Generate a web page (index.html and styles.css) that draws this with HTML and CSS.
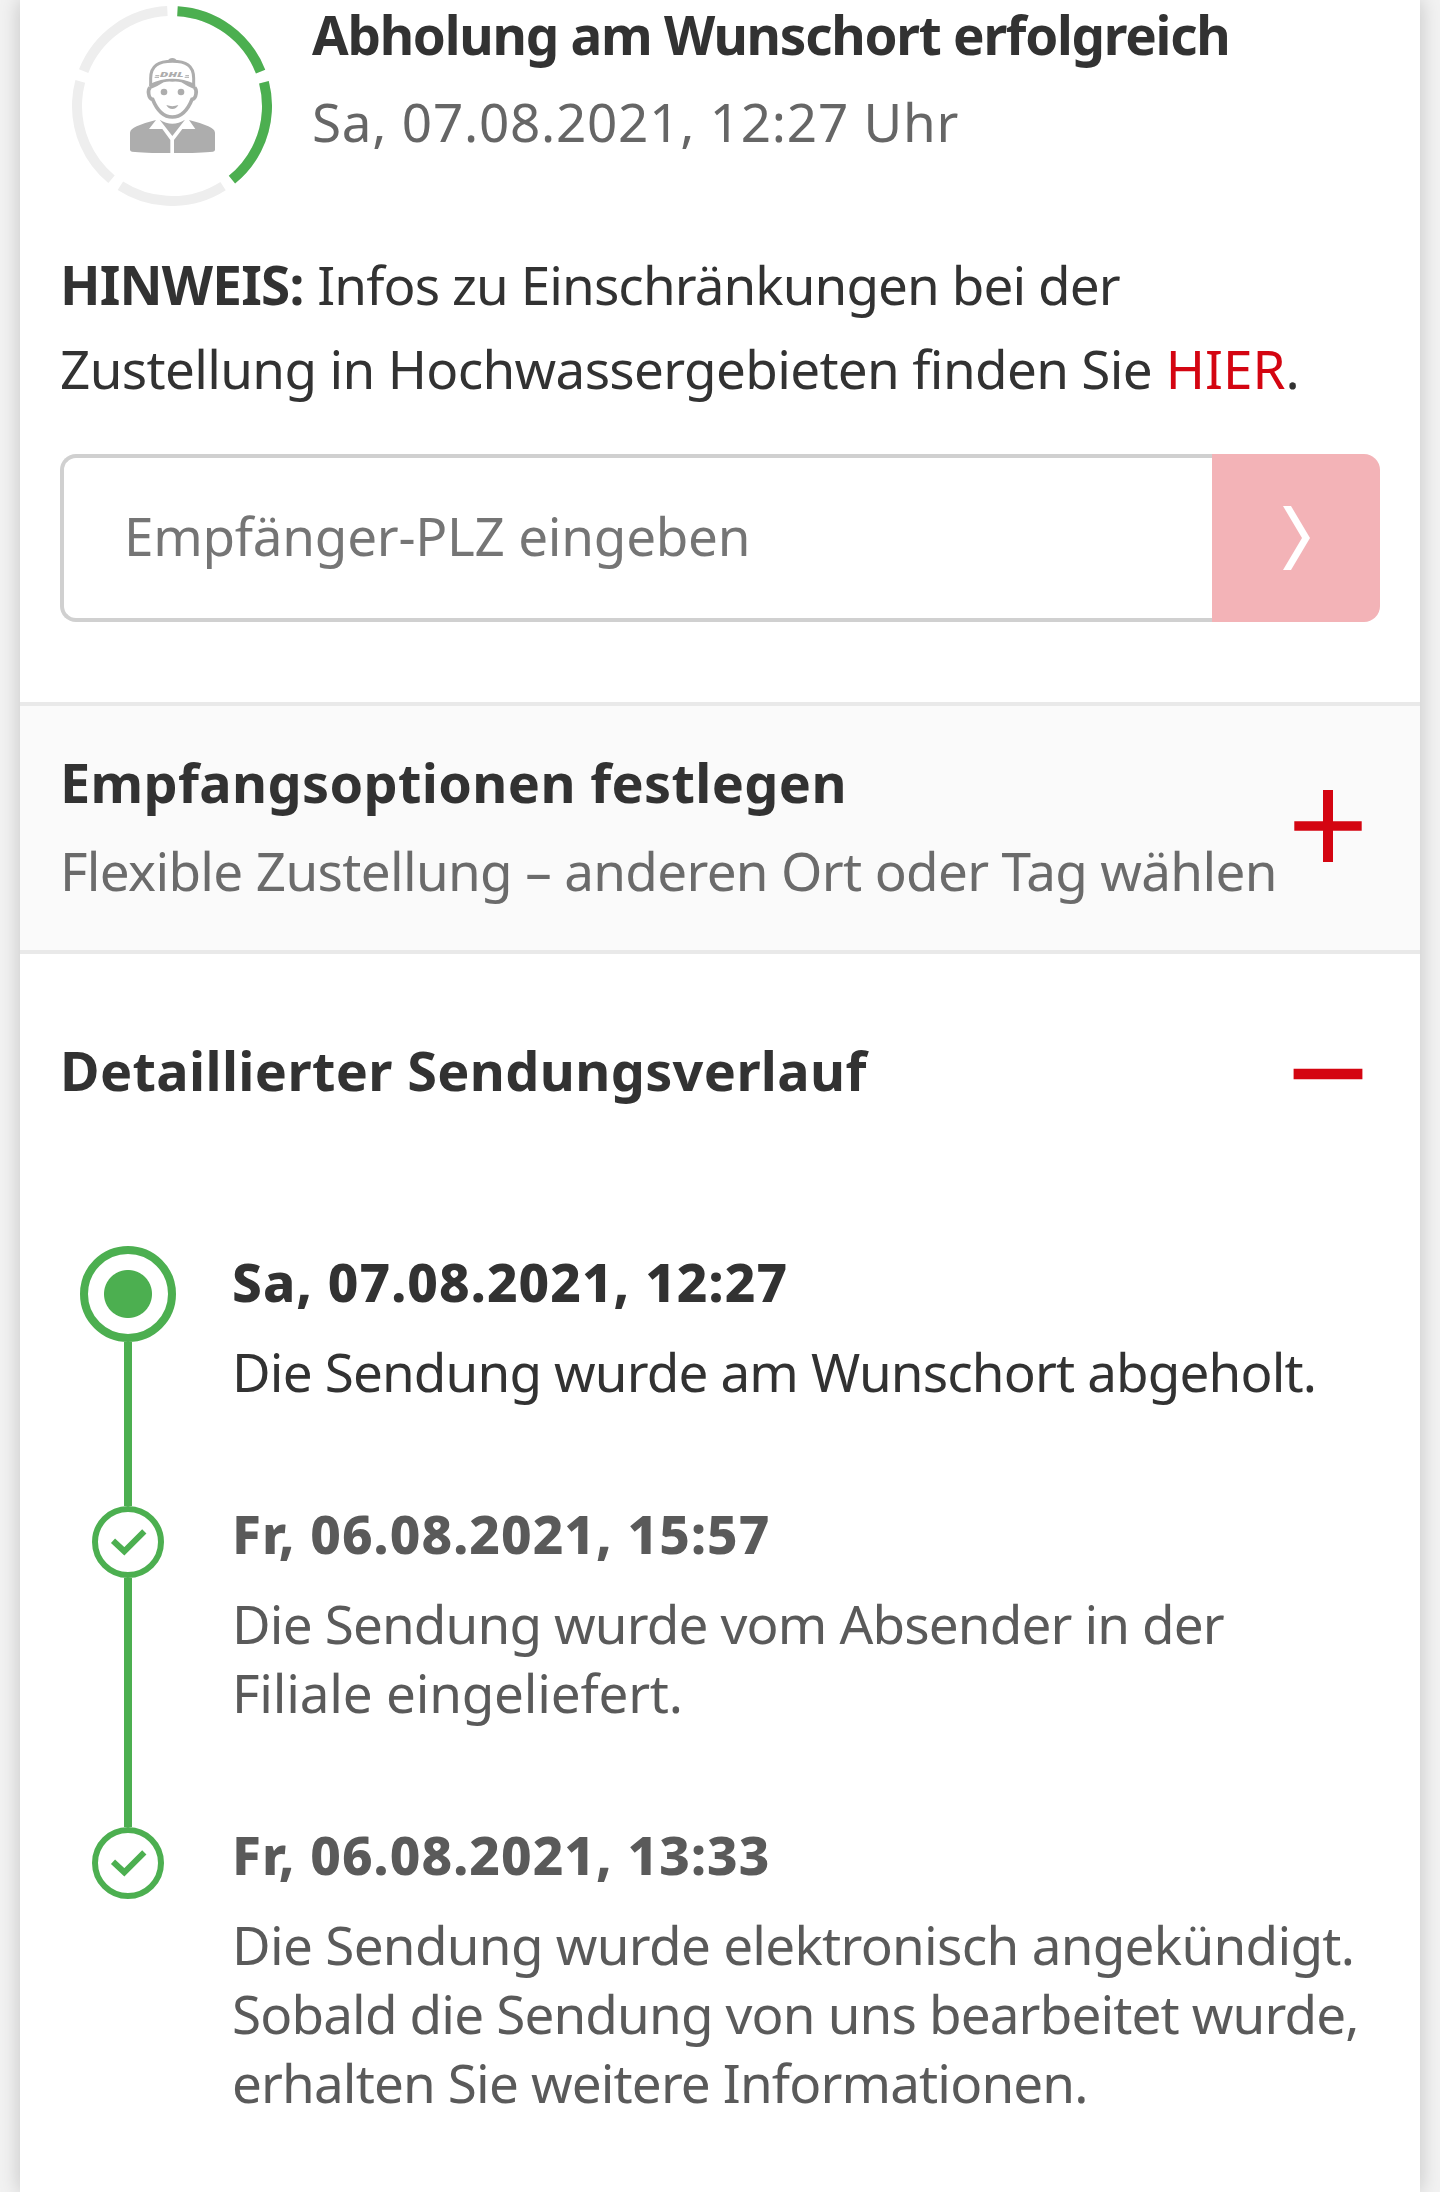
FILE: index.html
```html
<!DOCTYPE html>
<html lang="de">
<head>
	<meta charset="utf-8">
	<meta name="viewport" content="width=device-width, initial-scale=1">
	<title>Sendungsverfolgung</title>
	<link rel="stylesheet" href="styles.css">
</head>
<body>
	<main class="card">
		<section class="status">
			<div class="status-head">
				<svg class="progress" viewBox="216 18 600 600">
					<circle class="track" cx="516" cy="318" r="285" pathLength="360" stroke-dasharray="65.4 6.6" transform="rotate(-86.7 516 318)"/>
					<circle class="done" cx="516" cy="318" r="285" pathLength="360" stroke-dasharray="65.4 6.6 65.4 222.6" transform="rotate(-86.7 516 318)"/>
					<g class="courier">
						<path d="M503 183Q507 174 517 174Q527 174 531 183Z"/>
						<path class="line" d="M452 258V235C452 196 476 184 517 184C558 184 581 196 581 235V258"/>
						<path d="M449 252Q482 236 517 236Q552 236 585 252L587 269Q561 259 544 247Q531 243 517 245Q504 243 491 247Q474 259 447 269Z"/>
						<path class="line thick" d="M450 263Q444 269 446 281Q448 296 458 298C470 328 490 351 517 351C544 351 564 328 576 298Q586 296 588 281Q590 269 584 263"/>
						<circle cx="492" cy="276" r="10"/>
						<circle cx="543" cy="276" r="10"/>
						<path d="M499 315Q517 322 535 315Q529 327 517 327Q505 327 499 315Z"/>
						<text x="479" y="231" textLength="72" lengthAdjust="spacingAndGlyphs">DHL</text>
						<path class="stripe" d="M466 227H478M464 232H477M556 227H567M554 232H567"/>
						<path d="M390 398Q391 387 410 379Q438 367 468 360L447 387H487L511 420V459Q430 459 396 455Q390 454 390 449Z"/>
						<path d="M645 398Q644 387 625 379Q597 367 567 360L586 387H547L522 420V459Q604 459 639 455Q645 454 645 449Z"/>
						<path d="M479 359Q498 371 517 371Q536 371 555 359L517 408Z"/>
					</g>
				</svg>
				<div class="status-text">
					<h1 class="headline">Abholung am Wunschort erfolgreich</h1>
					<p class="date">Sa, 07.08.2021, 12:27 Uhr</p>
				</div>
			</div>
			<p class="notice"><b>HINWEIS:</b> <span class="narrow">Infos zu Einschränkungen bei der</span><br><span class="semi">Zustellung in Hochwassergebieten finden Sie</span> <a href="#">HIER</a>.</p>
			<form class="plz">
				<input class="plz-input" type="text" placeholder="Empfänger-PLZ eingeben">
				<button class="plz-button" type="button" aria-label="Absenden">
					<svg width="27" height="64" viewBox="0 0 27 64"><path d="M0 0H8L27 32L8 64H0L19 32Z" fill="#fff"/></svg>
				</button>
			</form>
		</section>

		<section class="options">
			<div>
				<h2 class="title">Empfangsoptionen festlegen</h2>
				<p class="sub semi">Flexible Zustellung – anderen Ort oder Tag wählen</p>
			</div>
			<svg class="toggle" width="70" height="72" viewBox="0 0 70 72"><path d="M1.3 31.3H30V0H40V31.3H68.7V40.7H40V72H30V40.7H1.3Z"/></svg>
		</section>

		<section class="history">
			<div class="history-head">
				<h2 class="title">Detaillierter Sendungsverlauf</h2>
				<svg class="toggle" width="70" height="12" viewBox="0 0 70 12"><path d="M.6 .8H69.4V11.2H.6Z"/></svg>
			</div>
			<ol class="timeline">
				<li class="item current">
					<div class="marker"><span class="dot"></span></div>
					<div class="entry">
						<h3>Sa, 07.08.2021, 12:27</h3>
						<p>Die Sendung wurde am Wunschort abgeholt.</p>
					</div>
				</li>
				<li class="item">
					<div class="marker">
						<svg class="check" width="72" height="72" viewBox="0 0 72 72"><circle cx="36" cy="36" r="33"/><path d="M21 34.7L32.3 45.3L52.3 25.3"/></svg>
					</div>
					<div class="entry">
						<h3>Fr, 06.08.2021, 15:57</h3>
						<p>Die Sendung wurde vom Absender in der<br><span class="wide">Filiale eingeliefert.</span></p>
					</div>
				</li>
				<li class="item">
					<div class="marker">
						<svg class="check" width="72" height="72" viewBox="0 0 72 72"><circle cx="36" cy="36" r="33"/><path d="M21 34.7L32.3 45.3L52.3 25.3"/></svg>
					</div>
					<div class="entry">
						<h3>Fr, 06.08.2021, 13:33</h3>
						<p><span class="semi">Die Sendung wurde elektronisch angekündigt.</span><br>Sobald die Sendung von uns bearbeitet wurde,<br>erhalten Sie weitere Informationen.</p>
					</div>
				</li>
			</ol>
		</section>
	</main>
</body>
</html>
```
FILE: styles.css
```css
* {box-sizing: border-box;}
body{
	margin: 0;
	background: #f2f2f2;
	color: #323232;
	font-family: "Noto Sans", sans-serif;
	font-size: 53px;
	line-height: 69px;
	height: 2192px;
	overflow: hidden;
}
h1, h2, h3, p, ol{margin: 0;padding: 0;font-size: inherit;}
a{color: #d40511;text-decoration: none;}

.card{
	margin: 0 20px;
	height: 2192px;
	background: #fff;
	box-shadow: 0 0 20px rgba(0, 0, 0, .2);
}
.headline{white-space: nowrap;letter-spacing: -1.25px;}
.title{white-space: nowrap;font-size: 54px;letter-spacing: .35px;}
.narrow{letter-spacing: -.91px;}
.semi{letter-spacing: -.66px;}
.wide{letter-spacing: -.2px;}

/* current status */
.status{height: 702px;padding: 0 40px;}
.status-head{display: flex;gap: 40px;height: 243px;padding-left: 12px;}
.progress{width: 200px;height: 200px;margin-top: 6px;flex: none;}
.progress circle.track, .progress circle.done{fill: none;stroke-width: 30;}
.progress .track{stroke: #eee;}
.progress .done{stroke: #4caf50;}
.courier{fill: #adadad;}
.courier .line{fill: none;stroke: #adadad;stroke-width: 9;}
.courier .thick{stroke-width: 11;}
.courier .stripe{stroke: #adadad;stroke-width: 3;}
.courier text{font: italic 900 21px "Noto Sans", sans-serif;}
.date{margin-top: 18px;color: #666;letter-spacing: .75px;}
.notice{line-height: 84px;white-space: nowrap;}
.notice b{letter-spacing: -.8px;}
.plz{display: flex;height: 168px;margin-top: 43px;}
.plz-input{
	flex: 1;
	min-width: 0;
	border: 4px solid #d0d0d0;
	border-right: 0;
	border-radius: 16px 0 0 16px;
	padding: 0 0 5px 60px;
	background: #fff;
	font: inherit;
	letter-spacing: -.25px;
}
.plz-input::placeholder{color: #757575;opacity: 1;}
.plz-button{
	width: 168px;
	border: 0;
	border-radius: 0 16px 16px 0;
	background: #f3b3b7;
	padding: 0;
	display: flex;
	align-items: center;
	justify-content: center;
}

/* delivery options */
.options{
	display: flex;
	justify-content: space-between;
	height: 252px;
	padding: 42px 57px 0 40px;
	background: #fafafa;
	border: 4px solid #e9e9e9;
	border-width: 4px 0;
}
.options .toggle{margin-top: 42px;}
.sub{margin-top: 19px;color: #6b6b6b;white-space: nowrap;}
.toggle{flex: none;fill: #d40511;}

/* tracking history */
.history-head{
	display: flex;
	justify-content: space-between;
	align-items: center;
	padding: 82px 57px 0 40px;
}
.history-head .toggle{margin-top: 7px;}
.timeline{list-style: none;margin-top: 141px;padding: 0 0 0 60px;}
.item{display: flex;gap: 56px;color: #5a5a5a;}
.item.current{color: #323232;}
.marker{
	flex: none;
	width: 96px;
	display: flex;
	flex-direction: column;
	align-items: center;
}
.marker::before{content: "";width: 8px;height: 7px;background: #4caf50;}
.marker::after{content: "";width: 8px;flex: 1;background: #4caf50;}
.item:last-child .marker::after{display: none;}
.current .marker::before{display: none;}
.dot{
	width: 96px;
	height: 96px;
	border: 8px solid #4caf50;
	border-radius: 50%;
	background: radial-gradient(circle, #4caf50 23.5px, transparent 24.5px);
}
.check{display: block;fill: none;stroke: #4caf50;stroke-width: 6;}
.entry{padding-bottom: 93px;white-space: nowrap;}
.current .entry{padding-top: 1px;}
.entry h3{font-weight: 800;letter-spacing: 1.05px;}
.entry p{margin-top: 21px;letter-spacing: -.85px;}
.entry .semi{letter-spacing: -.7px;}
```
